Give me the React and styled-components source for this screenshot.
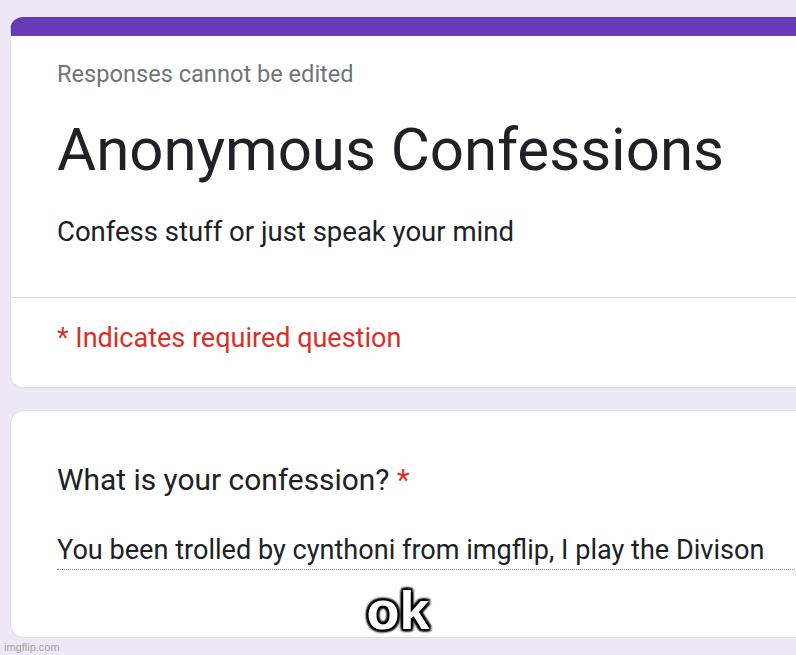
import React from "react";
import styled, { createGlobalStyle } from "styled-components";

const colors = {
  page: "#ede7f6",
  purple: "#673ab7",
  border: "#dadce0",
  text: "#202124",
  muted: "#70757a",
  red: "#d93025",
};

const GlobalStyle = createGlobalStyle`
  html, body {
    margin: 0;
    padding: 0;
    background: ${colors.page};
    overflow: hidden;
  }
  body {
    font-family: Roboto, "Liberation Sans", Arial, sans-serif;
  }
`;

export default () => {
  return (
    <Page>
      <GlobalStyle />
      <Card accent>
        <Section divided>
          <Note>Responses cannot be edited</Note>
          <Title>Anonymous Confessions</Title>
          <Description>Confess stuff or just speak your mind</Description>
        </Section>
        <Section bottom>
          <Required>* Indicates required question</Required>
        </Section>
      </Card>

      <Card>
        <Question>
          What is your confession? <Star>*</Star>
        </Question>
        <Answer>
          You been trolled by cynthoni from imgflip, I play the Divison
        </Answer>
      </Card>

      <Caption>ok</Caption>
      <Watermark>imgflip.com</Watermark>
    </Page>
  );
};

const Page = styled.div`
  position: relative;
  width: 796px;
  height: 655px;
  padding: 17px 0 0 10px;
  box-sizing: border-box;
  display: flex;
  flex-direction: column;
  gap: 22px;
  overflow: hidden;
`;

const Card = styled.div`
  width: 840px;
  background: #fff;
  border: 1px solid ${colors.border};
  border-radius: 13px;
  overflow: hidden;
  box-sizing: border-box;
  ${p =>
    p.accent
      ? `border-top: 19px solid ${colors.purple};`
      : `padding: 52px 46px 67px 46px;`}
`;

const Section = styled.div`
  padding: ${p => (p.bottom ? "24px 46px 33px" : "24px 46px 49px")};
  border-bottom: ${p => (p.divided ? `1px solid ${colors.border}` : "none")};
`;

const Note = styled.div`
  font-size: 23.6px;
  line-height: 28px;
  color: ${colors.muted};
`;

const Title = styled.div`
  margin-top: 26px;
  font-size: 60px;
  line-height: 72px;
  color: ${colors.text};
`;

const Description = styled.div`
  margin-top: 30px;
  font-size: 27.5px;
  line-height: 32px;
  color: ${colors.text};
`;

const Required = styled.div`
  font-size: 27px;
  line-height: 32px;
  color: ${colors.red};
`;

const Question = styled.div`
  font-size: 29.9px;
  line-height: 34px;
  color: ${colors.text};
`;

const Star = styled.span`
  color: ${colors.red};
`;

const Answer = styled.div`
  margin-top: 37px;
  padding-bottom: 3px;
  font-size: 27.1px;
  line-height: 32px;
  color: ${colors.text};
  border-bottom: 1px dotted #8a8a8a;
`;

const Caption = styled.div`
  position: absolute;
  left: 0;
  right: 0;
  top: 578px;
  text-align: center;
  font-family: "Liberation Sans", Arial, sans-serif;
  font-weight: 700;
  font-size: 54px;
  line-height: 64px;
  color: #fff;
  text-shadow: 2px 2px 2px #000, -2px -2px 2px #000, 2px -2px 2px #000,
    -2px 2px 2px #000, 0 2px 3px #000, 0 -2px 3px #000, 2px 0 3px #000,
    -2px 0 3px #000;
`;

const Watermark = styled.div`
  position: absolute;
  left: 4px;
  bottom: 2px;
  font-family: "Liberation Sans", Arial, sans-serif;
  font-size: 11px;
  color: #a3a3a3;
`;
